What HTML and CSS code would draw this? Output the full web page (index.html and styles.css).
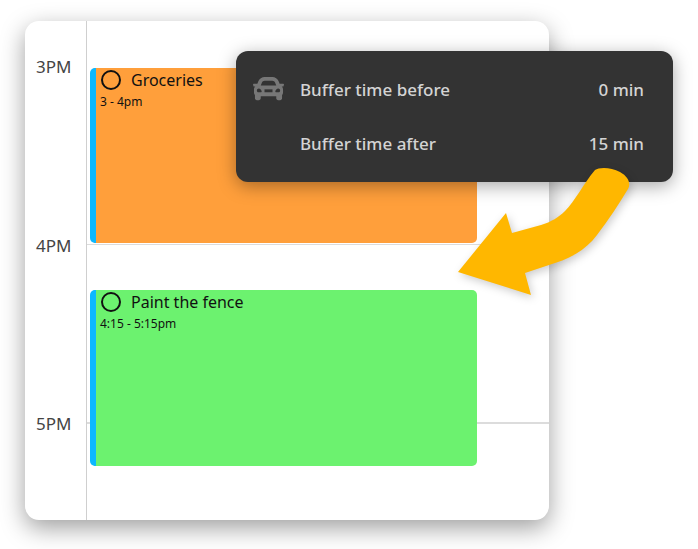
FILE: index.html
```html
<!DOCTYPE html>
<html lang="en">
<head>
  <meta charset="UTF-8">
  <meta name="viewport" content="width=device-width, initial-scale=1">
  <title>Buffer time</title>
  <link rel="stylesheet" href="styles.css">
</head>
<body>
  <div class="scene">
    <div class="calendar">
      <div class="hours">
        <div class="hour">3PM</div>
        <div class="hour">4PM</div>
        <div class="hour">5PM</div>
      </div>
      <div class="day">
        <div class="event event-orange">
          <div class="event-title"><span class="check"></span>Groceries</div>
          <div class="event-time">3 - 4pm</div>
        </div>
        <div class="event event-green">
          <div class="event-title"><span class="check"></span>Paint the fence</div>
          <div class="event-time">4:15 - 5:15pm</div>
        </div>
      </div>
    </div>

    <div class="tooltip">
      <svg class="car" viewBox="0 0 512 512" aria-hidden="true">
        <path fill-rule="evenodd" d="M499.99 176h-59.87l-16.64-41.6C406.38 91.63 365.57 64 319.5 64h-127c-46.06 0-86.88 27.63-103.99 70.4L71.87 176H12.01C4.2 176-1.53 183.34.37 190.91l6 24C7.7 220.25 12.5 224 18.01 224h20.07C24.65 235.73 16 252.78 16 272v48c0 16.12 6.16 30.67 16 41.93V416c0 17.67 14.33 32 32 32h32c17.67 0 32-14.33 32-32v-32h256v32c0 17.67 14.33 32 32 32h32c17.67 0 32-14.33 32-32v-54.07c9.84-11.25 16-25.8 16-41.93v-48c0-19.22-8.65-36.27-22.07-48H494c5.51 0 10.31-3.75 11.64-9.09l6-24c1.89-7.57-3.84-14.91-11.65-14.91zm-352.06-17.83c7.29-18.22 24.94-30.17 44.57-30.17h127c19.63 0 37.28 11.95 44.57 30.17L384 208H128l19.93-49.83zM96 319.8c-19.2 0-32-12.76-32-31.9S76.8 256 96 256s48 28.71 48 47.85-28.8 15.95-48 15.95zm320 0c-19.2 0-48 3.19-48-15.95S396.8 256 416 256s32 12.76 32 31.9-12.8 31.9-32 31.9z"/>
        <path class="grill" d="M190 270h132v48H190z"/>
      </svg>
      <div class="buffer-rows">
        <div class="buffer-row"><span>Buffer time before</span><span>0 min</span></div>
        <div class="buffer-row"><span>Buffer time after</span><span>15 min</span></div>
      </div>
    </div>

    <svg class="arrow" viewBox="0 0 180 130" aria-hidden="true">
      <path d="M136 1C140 -2 152 -2 161 3C170 8 172 15 169 20C160 35 150 50 138 66C126 82 110 90 90 96L66 104L72 126L-1 103L47 44L53 64L82 56C92 53 100 48 106 42C116 32 125 14 136 1Z"/>
    </svg>
  </div>
</body>
</html>
```

FILE: styles.css
```css
* {
  box-sizing: border-box;
}

body {
  margin: 0;
  background-color: #ffffff;
  font-family: "Noto Sans", "Open Sans", sans-serif;
  color: #222;
}

.scene {
  position: relative;
  width: 698px;
  height: 549px;
  padding: 21px 149px 29px 25px;
  overflow: hidden;
}

.calendar {
  display: flex;
  height: 499px;
  background-color: #fff;
  border-radius: 14px;
  box-shadow: 0 8px 24px rgba(0, 0, 0, 0.38);
  overflow: hidden;
}

.hours {
  width: 62px;
  padding-top: 35px;
  border-right: 1px solid #cfcfcf;
}

.hour {
  height: 178.5px;
  padding-left: 11px;
  font-size: 17px;
  line-height: 22px;
  color: #444;
}

.day {
  flex: 1;
  padding: 47px 72px 0 3px;
  background-image: repeating-linear-gradient(to bottom, transparent 0, transparent 177px, #dcdcdc 177px, #dcdcdc 178.5px);
  background-position: 0 46px;
  background-repeat: no-repeat;
  background-size: 100% 400px;
}

.event {
  border-left: 6px solid #0cb8ff;
  border-radius: 5px;
  padding: 0 4px;
  overflow: hidden;
  height: 175px;
  color: #111;
}

.event-orange {
  background-color: #ff9f3b;
}

.event-green {
  margin-top: 47px;
  height: 176px;
  background-color: #6cf26f;
}

.event-title {
  display: flex;
  align-items: center;
  height: 23px;
  font-size: 16px;
}

.check {
  width: 20px;
  height: 20px;
  margin-right: 10px;
  margin-left: 1px;
  border: 2px solid #111;
  border-radius: 50%;
}

.event-time {
  margin-top: 1px;
  font-size: 12px;
  line-height: 20px;
}

.tooltip {
  position: absolute;
  left: 236px;
  top: 51px;
  display: flex;
  width: 437px;
  height: 131px;
  padding: 12px 29px 0 17px;
  background-color: #333333;
  border-radius: 12px;
  box-shadow: 0 4px 18px rgba(0, 0, 0, 0.35);
  color: #d4d4d4;
}

.car {
  width: 31px;
  height: 31px;
  margin-top: 10px;
  fill: #777777;
}

.car .grill {
  fill: #333333;
}

.buffer-rows {
  flex: 1;
  margin-left: 16px;
}

.buffer-row {
  display: flex;
  justify-content: space-between;
  height: 54px;
  font-size: 17px;
  font-weight: 500;
  line-height: 54px;
}

.arrow {
  position: absolute;
  left: 459px;
  top: 169px;
  width: 180px;
  height: 130px;
  overflow: visible;
  fill: #ffb700;
  filter: drop-shadow(2px 3px 4px rgba(0, 0, 0, 0.2));
}
```
